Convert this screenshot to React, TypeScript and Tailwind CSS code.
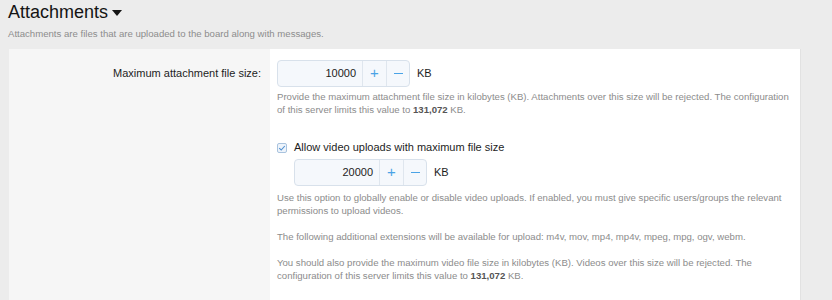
import React from 'react';

function NumberBox({ value }: { value: string }) {
  return (
    <div className="flex items-center">
      <div className="flex h-[27px] w-[133px] rounded-[4px] border border-[#d8e1eb] bg-[#f5f8fc]">
        <div className="flex flex-1 items-center justify-end pr-[6px] text-[11px] text-[#1d1d1d]">{value}</div>
        <div className="flex w-[24px] items-center justify-center border-l border-[#dfe6ee] text-[15px] text-[#4aa3e6]">+</div>
        <div className="flex w-[23px] items-center justify-center border-l border-[#dfe6ee]">
          <span className="block h-[1.5px] w-[9px] bg-[#4aa3e6]" />
        </div>
      </div>
      <span className="ml-[7px] text-[11px] text-[#1d1d1d]">KB</span>
    </div>
  );
}

export default function App() {
  return (
    <div
      className="h-[300px] w-[832px] overflow-hidden bg-[#ececec]"
      style={{ fontFamily: '"Liberation Sans", Arial, sans-serif' }}
    >
      {/* Section header */}
      <div className="px-2">
        <div className="flex items-center h-[24px]">
          <h2 className="text-[18px] leading-[24px] text-[#141414]">Attachments</h2>
          <svg width="10" height="6" viewBox="0 0 10 6" className="ml-[4px] mt-[1px]">
            <path d="M0 0 L10 0 L5 6 Z" fill="#141414" />
          </svg>
        </div>
        <p className="mt-[3px] text-[9.6px] leading-[13px] text-[#8c8c8c]">
          Attachments are files that are uploaded to the board along with messages.
        </p>
      </div>

      {/* Options panel */}
      <div className="ml-[9px] mt-[9px] flex w-[792px] border-r border-[#e2e2e2]">
        <div className="w-[261px] shrink-0 bg-[#f6f6f6] pr-[9px] pt-[11px]">
          <div className="flex h-[27px] items-center justify-end text-[11px] text-[#1d1d1d]">
            Maximum attachment file size:
          </div>
        </div>

        <div className="flex-1 bg-white pl-[7px] pr-[8px] pt-[11px] pb-[30px]">
          <NumberBox value="10000" />
          <p className="mt-[3px] text-[9.6px] leading-[13px] text-[#8c8c8c]">
            Provide the maximum attachment file size in kilobytes (KB). Attachments over this size will be rejected. The configuration of this server limits this value to <b className="text-[#555]">131,072</b> KB.
          </p>

          <div className="mt-[25px] flex h-[13px] items-center">
            <span className="flex h-[10px] w-[10px] items-center justify-center rounded-[2px] border border-[#a9c3de] bg-[#eef4fb]">
              <svg width="8" height="8" viewBox="0 0 8 8">
                <path d="M1.2 4.2 L3.2 6 L6.8 2" fill="none" stroke="#4f8fd0" strokeWidth="1.1" />
              </svg>
            </span>
            <span className="ml-[7px] text-[11px] text-[#1d1d1d]">Allow video uploads with maximum file size</span>
          </div>

          <div className="ml-[17px] mt-[5px]">
            <NumberBox value="20000" />
          </div>

          <div className="mt-[4.5px] text-[9.6px] leading-[13px] text-[#8c8c8c]">
            <p>
              Use this option to globally enable or disable video uploads. If enabled, you must give specific users/groups the relevant permissions to upload videos.
            </p>
            <p className="mt-[13px]">
              The following additional extensions will be available for upload: m4v, mov, mp4, mp4v, mpeg, mpg, ogv, webm.
            </p>
            <p className="mt-[13px]">
              You should also provide the maximum video file size in kilobytes (KB). Videos over this size will be rejected. The configuration of this server limits this value to <b className="text-[#555]">131,072</b> KB.
            </p>
          </div>
        </div>
      </div>
    </div>
  );
}
